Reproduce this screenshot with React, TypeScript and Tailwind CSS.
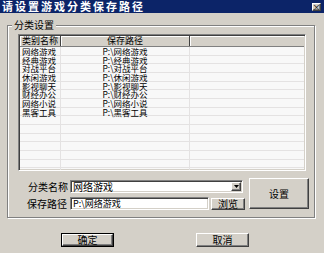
const rows = [
  ['网络游戏', 'P:\\网络游戏'],
  ['经典游戏', 'P:\\经典游戏'],
  ['对战平台', 'P:\\对战平台'],
  ['休闲游戏', 'P:\\休闲游戏'],
  ['影视聊天', 'P:\\影视聊天'],
  ['财经办公', 'P:\\财经办公'],
  ['网络小说', 'P:\\网络小说'],
  ['黑客工具', 'P:\\黑客工具'],
]

const filler = Array.from({ length: 8 }, () => ['', ''])

const raised =
  'border border-t-white border-l-white border-r-[#404040] border-b-[#404040] shadow-[inset_-1px_-1px_0_#808080] bg-[#d4d0c8]'
const sunken =
  'border border-t-[#808080] border-l-[#808080] border-r-white border-b-white shadow-[inset_1px_1px_0_#404040,inset_-1px_-1px_0_#d4d0c8]'

const Button = ({ label, className }: { label: string; className: string }) => (
  <div className={`flex items-center justify-center text-[10px] leading-none text-black ${raised} ${className}`}>
    {label}
  </div>
)

export default function App() {
  return (
    <div className="w-[324px] h-[253px] overflow-hidden bg-[#d4d0c8] flex flex-col font-['Noto_Sans_CJK_SC',sans-serif] select-none">
      {/* title bar */}
      <div className="h-[13px] shrink-0 bg-[#0c2468] flex items-center pl-[2px] pr-[3px]">
        <span className="text-white font-bold text-[11px] leading-[11px] tracking-[2px] whitespace-nowrap">请设置游戏分类保存路径</span>
        <div className={`ml-auto w-[9px] h-[8px] flex items-center justify-center text-[8px] leading-none text-black ${raised}`}>
          ×
        </div>
      </div>

      {/* group box */}
      <div className="relative mt-[12px] ml-[7px] w-[308px] h-[193px] border border-[#808080] shadow-[inset_1px_1px_0_#fff,1px_1px_0_#fff] pl-[10px] pt-[8px]">
        <span className="absolute -top-[7px] left-[4px] bg-[#d4d0c8] px-[2px] text-[10px] leading-[12px] text-black">
          分类设置
        </span>

        {/* list view */}
        <div className={`w-[288px] h-[137px] bg-[#f8f8f8] overflow-hidden p-[1px] ${sunken}`}>
          <div className="flex h-[11px] bg-[#d4d0c8] border-b border-[#808080] text-[9px] leading-[10px] text-black">
            <div className="w-[41px] pl-[2px] border-r border-[#404040] shadow-[inset_1px_1px_0_#fff] whitespace-nowrap">类别名称</div>
            <div className="w-[129px] text-center border-r border-[#404040] shadow-[inset_1px_1px_0_#fff]">保存路径</div>
            <div className="flex-1 shadow-[inset_1px_1px_0_#fff]" />
          </div>
          {[...rows, ...filler].map(([name, path], i) => (
            <div key={i} className="flex h-[8.67px] border-b border-[#e4e2e2] text-[8.5px] leading-[8px] text-black">
              <div className="w-[41px] pl-[2px] border-r border-[#e4e2e2] whitespace-nowrap">{name}</div>
              <div className="w-[129px] text-center border-r border-[#e4e2e2] whitespace-nowrap">{path}</div>
              <div className="flex-1" />
            </div>
          ))}
        </div>

        {/* form controls */}
        <div className="flex mt-[7px]">
          <div className="flex flex-col pt-[2px] gap-[4px]">
            <div className="flex items-center h-[13px]">
              <span className="w-[52px] shrink-0 pr-[2px] text-right text-[10px] leading-none text-black">分类名称</span>
              <div className={`w-[173px] shrink-0 h-[13px] bg-white flex items-center pl-[2px] pr-[1px] ${sunken}`}>
                <span className="text-[10px] leading-none text-black">网络游戏</span>
                <div className={`ml-auto w-[10px] h-[9px] flex items-center justify-center ${raised}`}>
                  <svg width="5" height="3" viewBox="0 0 5 3">
                    <path d="M0 0h5L2.5 3z" fill="#000" />
                  </svg>
                </div>
              </div>
            </div>
            <div className="flex items-center h-[13px]">
              <span className="w-[52px] shrink-0 pr-[3px] text-right text-[10px] leading-none text-black">保存路径</span>
              <div className={`w-[139px] shrink-0 h-[13px] bg-white flex items-center pl-[2px] ${sunken}`}>
                <span className="text-[9px] leading-none text-black">P:\网络游戏</span>
              </div>
              <Button label="浏览" className="ml-[2px] w-[34px] h-[12px]" />
            </div>
          </div>
          <Button label="设置" className="ml-[4px] w-[60px] h-[31px]" />
        </div>
      </div>

      {/* dialog buttons */}
      <div className="flex mt-[15px]">
        <div className="ml-[61px] border border-black">
          <Button label="确定" className="w-[51px] h-[12px]" />
        </div>
        <Button label="取消" className="ml-[82px] w-[53px] h-[14px]" />
      </div>
    </div>
  )
}
